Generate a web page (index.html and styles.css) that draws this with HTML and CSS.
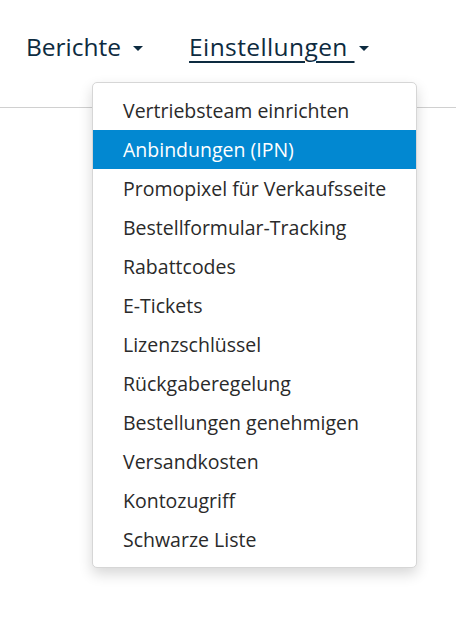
FILE: index.html
```html
<!DOCTYPE html>
<html lang="de">
<head>
<meta charset="utf-8">
<title>Einstellungen</title>
<link rel="stylesheet" href="styles.css">
</head>
<body>
<header class="topbar">
  <nav class="nav">
    <a class="nav-item" href="#"><span>Berichte</span><span class="caret"></span></a>
    <a class="nav-item active" href="#"><span class="ul">Einstellungen </span><span class="caret near"></span></a>
  </nav>
  <ul class="dropdown">
    <li><a href="#">Vertriebsteam einrichten</a></li>
    <li><a class="hl" href="#">Anbindungen (IPN)</a></li>
    <li><a href="#">Promopixel für Verkaufsseite</a></li>
    <li><a href="#">Bestellformular-Tracking</a></li>
    <li><a href="#">Rabattcodes</a></li>
    <li><a href="#">E-Tickets</a></li>
    <li><a href="#">Lizenzschlüssel</a></li>
    <li><a href="#">Rückgaberegelung</a></li>
    <li><a href="#">Bestellungen genehmigen</a></li>
    <li><a href="#">Versandkosten</a></li>
    <li><a href="#">Kontozugriff</a></li>
    <li><a href="#">Schwarze Liste</a></li>
  </ul>
</header>
</body>
</html>
```
FILE: styles.css
```css
html, body {
  margin: 0;
  padding: 0;
  background: #fff;
}
body {
  font-family: "Open Sans", "Noto Sans", sans-serif;
  width: 456px;
  height: 618px;
  overflow: hidden;
}
.topbar {
  position: relative;
  height: 107px;
  border-bottom: 1px solid #d0d0d0;
}
.nav {
  display: flex;
  gap: 46px;
  padding: 28px 0 0 26px;
}
.nav-item {
  color: #0d2b40;
  text-decoration: none;
  font-size: 24.5px;
  line-height: 38px;
  display: flex;
  align-items: center;
}
.nav-item .ul {
  text-decoration: underline;
  text-underline-offset: 5px;
  text-decoration-thickness: 2px;
  white-space: pre;
  letter-spacing: 0.4px;
}
.caret {
  display: inline-block;
  width: 0;
  height: 0;
  margin-left: 12px;
  margin-top: 2px;
  border-left: 5px solid transparent;
  border-right: 5px solid transparent;
  border-top: 5px solid #0d2b40;
}
.caret.near {
  margin-left: 4px;
}
.dropdown {
  position: absolute;
  left: 92px;
  top: 82px;
  width: 323px;
  margin: 0;
  padding: 8px 0 8px;
  list-style: none;
  background: #fff;
  border: 1px solid #d6d6d6;
  border-radius: 5px;
  box-shadow: 0 6px 14px rgba(0, 0, 0, 0.16);
}
.dropdown a {
  display: block;
  height: 39px;
  line-height: 39px;
  padding-left: 30px;
  font-size: 19.5px;
  color: #2a2a2a;
  text-decoration: none;
}
.dropdown a.hl {
  background: #0288d1;
  color: #fff;
}
```
